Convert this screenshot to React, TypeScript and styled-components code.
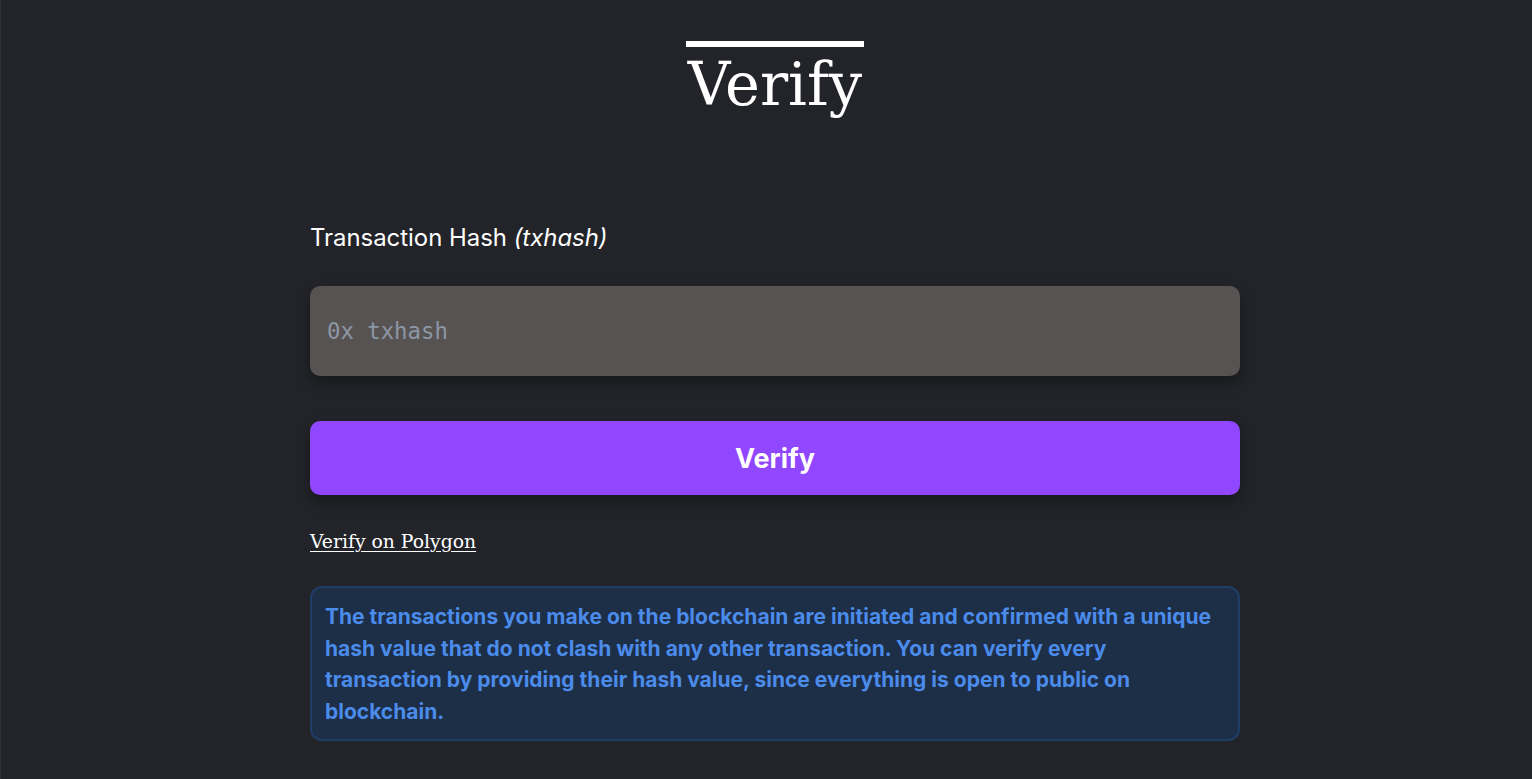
import React from "react";
import styled, { createGlobalStyle } from "styled-components";

const Global = createGlobalStyle`
  html, body {
    margin: 0;
    padding: 0;
    background: #222429;
  }
  body {
    font-family: Inter, "Noto Sans", sans-serif;
    color: #ffffff;
  }
`;

const Page = styled.div`
  min-height: 779px;
  box-sizing: border-box;
  border-left: 1px solid #2c2f35;
  display: flex;
  flex-direction: column;
  align-items: center;
  padding: 41px 0 0 17px;
`;

const Title = styled.h1`
  margin: 0;
  font-family: "DejaVu Serif", serif;
  font-weight: 400;
  font-size: 59px;
  line-height: 76px;
  border-top: 6px solid #ffffff;
  letter-spacing: 0;
  padding: 0 2px;
`;

const Form = styled.div`
  width: 930px;
  display: flex;
  flex-direction: column;
  margin-top: 101px;
`;

const Label = styled.label`
  font-size: 23.9px;
  line-height: 28px;
  color: #ffffff;
  em {
    font-style: italic;
  }
`;

const Input = styled.input`
  margin-top: 34px;
  height: 90px;
  box-sizing: border-box;
  border: none;
  outline: none;
  border-radius: 10px;
  background: #575353;
  padding: 0 17px;
  font-family: "DejaVu Sans Mono", monospace;
  font-size: 22.3px;
  color: #e0e0e0;
  box-shadow: 0 6px 14px rgba(0, 0, 0, 0.35);
  &::placeholder {
    color: #8d97a6;
  }
`;

const Button = styled.button`
  margin-top: 45px;
  height: 74px;
  border: none;
  border-radius: 10px;
  background: #9146ff;
  color: #ffffff;
  font-family: Inter, sans-serif;
  font-weight: 700;
  font-size: 27px;
  cursor: pointer;
  box-shadow: 0 6px 14px rgba(0, 0, 0, 0.35);
`;

const LinkRow = styled.div`
  margin-top: 35px;
`;

const PolyLink = styled.a`
  font-family: "DejaVu Serif", serif;
  font-size: 18.8px;
  line-height: 24px;
  color: #ffffff;
  text-decoration: underline;
  text-underline-offset: 3px;
`;

const Info = styled.div`
  margin-top: 32px;
  background: #1d2e47;
  border: 2px solid #1f3d66;
  border-radius: 12px;
  padding: 13px 20px 11px 13px;
  font-family: Inter, sans-serif;
  font-weight: 700;
  font-size: 21px;
  line-height: 31.7px;
  color: #4b8bea;
`;

export default function App() {
  return (
    <>
      <Global />
      <Page>
        <Title>Verify</Title>
        <Form>
          <Label>
            Transaction Hash <em>(txhash)</em>
          </Label>
          <Input placeholder="0x txhash" />
          <Button>Verify</Button>
          <LinkRow>
            <PolyLink href="#">Verify on Polygon</PolyLink>
          </LinkRow>
          <Info>
            The transactions you make on the blockchain are initiated and confirmed with a unique
            hash value that do not clash with any other transaction. You can verify every
            transaction by providing their hash value, since everything is open to public on
            blockchain.
          </Info>
        </Form>
      </Page>
    </>
  );
}
